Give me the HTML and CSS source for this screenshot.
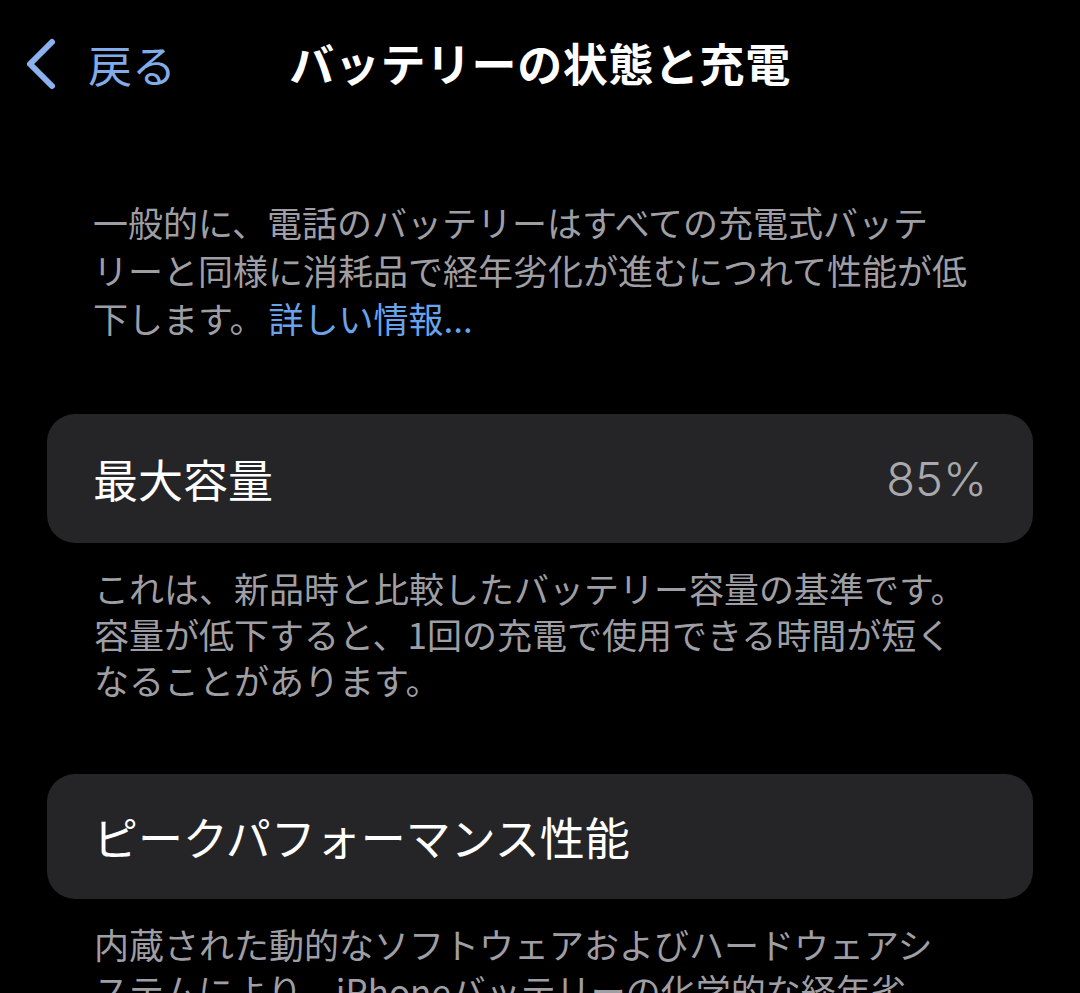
FILE: index.html
```html
<!DOCTYPE html>
<html lang="ja">
<head>
<meta charset="utf-8">
<link rel="stylesheet" href="styles.css">
</head>
<body>
<div class="screen">
  <header class="nav">
    <div class="back">
      <svg class="chev" width="34" height="56" viewBox="0 0 34 56"><path d="M28 6 L6 28 L28 50" fill="none" stroke="#8ab2ee" stroke-width="6" stroke-linecap="round" stroke-linejoin="round"/></svg>
      <span class="back-label">戻る</span>
    </div>
    <h1 class="title">バッテリーの状態と充電</h1>
  </header>

  <p class="intro">一般的に、電話のバッテリーはすべての充電式バッテ<br>リーと同様に消耗品で経年劣化が進むにつれて性能が低<br>下します。<span class="link">詳しい情報...</span></p>

  <section class="card">
    <span class="card-label">最大容量</span>
    <span class="card-value">85%</span>
  </section>
  <p class="footer">これは、新品時と比較したバッテリー容量の基準です。<br>容量が低下すると、1回の充電で使用できる時間が短く<br>なることがあります。</p>

  <section class="card card-peak">
    <span class="card-label">ピークパフォーマンス性能</span>
  </section>
  <p class="footer">内蔵された動的なソフトウェアおよびハードウェアシ<br>ステムにより、iPhoneバッテリーの化学的な経年劣</p>
</div>
</body>
</html>
```

FILE: styles.css
```css
html, body {
  margin: 0;
  padding: 0;
  background: #000;
}
body {
  width: 1080px;
  height: 993px;
  overflow: hidden;
  font-family: "Noto Sans CJK JP", "Noto Sans", sans-serif;
  color: #fff;
}
.screen {
  display: flex;
  flex-direction: column;
}
.nav {
  position: relative;
  height: 126px;
  display: flex;
  align-items: center;
  justify-content: center;
}
.back {
  position: absolute;
  left: 24px;
  top: 36px;
  display: flex;
  align-items: center;
  gap: 30px;
}
.chev {
  display: block;
}
.back-label {
  font-size: 44px;
  line-height: 56px;
  color: #82abe9;
}
.title {
  margin: 0;
  font-size: 45px;
  font-weight: 700;
  line-height: 56px;
  letter-spacing: 0.6px;
}
.intro {
  margin: 72px 0 0 93px;
  font-size: 35px;
  line-height: 48px;
  color: #9e9ea4;
}
.link {
  margin-left: 4px;
  color: #6aa2ec;
}
.card {
  margin: 72px 47px 0 47px;
  height: 129px;
  border-radius: 28px;
  background: #252527;
  display: flex;
  align-items: center;
  justify-content: space-between;
  padding: 0 46px;
}
.card-peak {
  height: 125px;
  margin-top: 71px;
}
.card-label {
  font-size: 45px;
  line-height: 56px;
  color: #fff;
}
.card-value {
  font-family: "Inter", "Noto Sans", sans-serif;
  font-weight: 300;
  font-size: 47px;
  line-height: 56px;
  color: #a8a8ad;
}
.footer {
  margin: 22px 0 0 94px;
  font-size: 35px;
  line-height: 46px;
  color: #9e9ea4;
}
```
